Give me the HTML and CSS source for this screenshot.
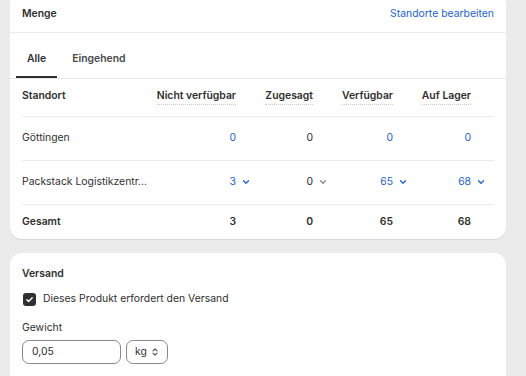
FILE: index.html
```html
<!DOCTYPE html>
<html lang="de">

<head>
     <meta charset="UTF-8">
     <meta name="viewport" content="width=device-width, initial-scale=1.0">
     <title>Menge</title>
     <link rel="stylesheet" href="styles.css">
</head>

<body>
     <div class="page">
          <div class="card stock">
               <div class="cardHeader">
                    <h2>Menge</h2>
                    <a class="link" href="#">Standorte bearbeiten</a>
               </div>
               <div class="tabs">
                    <button class="tab active">Alle</button>
                    <button class="tab">Eingehend</button>
               </div>
               <div class="table">
                    <div class="row head">
                         <span>Standort</span>
                         <span class="num"><em>Nicht verfügbar</em></span>
                         <span class="num"><em>Zugesagt</em></span>
                         <span class="num"><em>Verfügbar</em></span>
                         <span class="num"><em>Auf Lager</em></span>
                    </div>
                    <div class="row">
                         <span>Göttingen</span>
                         <span class="num blue">0</span>
                         <span class="num">0</span>
                         <span class="num blue">0</span>
                         <span class="num blue">0</span>
                    </div>
                    <div class="row">
                         <span>Packstack Logistikzentr...</span>
                         <span class="num blue">3<svg class="chev" viewBox="0 0 8 8"><path d="M1.5 2.8 4 5.3 6.5 2.8" /></svg></span>
                         <span class="num">0<svg class="chev gray" viewBox="0 0 8 8"><path d="M1.5 2.8 4 5.3 6.5 2.8" /></svg></span>
                         <span class="num blue">65<svg class="chev" viewBox="0 0 8 8"><path d="M1.5 2.8 4 5.3 6.5 2.8" /></svg></span>
                         <span class="num blue">68<svg class="chev" viewBox="0 0 8 8"><path d="M1.5 2.8 4 5.3 6.5 2.8" /></svg></span>
                    </div>
                    <div class="row total">
                         <span>Gesamt</span>
                         <span class="num">3</span>
                         <span class="num">0</span>
                         <span class="num">65</span>
                         <span class="num">68</span>
                    </div>
               </div>
          </div>

          <div class="card shipping">
               <h2>Versand</h2>
               <label class="check">
                    <span class="box"><svg viewBox="0 0 13 13"><path d="M3.8 6.7 5.6 8.4 9.2 4.7" /></svg></span>
                    Dieses Produkt erfordert den Versand
               </label>
               <div class="field">
                    <span class="fieldLabel">Gewicht</span>
                    <div class="inputs">
                         <div class="input">0,05</div>
                         <div class="select">kg<svg viewBox="0 0 8 10"><path d="M2 3.8 4 1.8 6 3.8M2 6.2 4 8.2 6 6.2" /></svg></div>
                    </div>
               </div>
          </div>
     </div>
</body>

</html>
```

FILE: styles.css
```css
* {
     margin: 0px;
     padding: 0px;
     box-sizing: border-box;
     font-family: Inter, "Noto Sans", sans-serif;
}

body {
     background-color: #ebebeb;
     color: #303030;
     font-size: 10.4px;
     line-height: 16px;
     overflow: hidden;
}

.page {
     display: flex;
     flex-direction: column;
     gap: 14px;
     padding: 0px 20px 0px 10px;
}

.card {
     background-color: #fff;
     border-radius: 12px;
     box-shadow: 0px 1px 0px rgba(26, 26, 26, 0.09);
}

.stock {
     margin-top: -8px;
}

h2 {
     font-size: 10.4px;
     font-weight: 600;
}

.cardHeader {
     display: flex;
     justify-content: space-between;
     padding: 14px 12px 10px 12px;
     border-bottom: 1px solid #ebebeb;
}

.link {
     color: #1d63cf;
     text-decoration: none;
}

.tabs {
     display: flex;
     gap: 4px;
     padding: 11px 6px 0px 6px;
     border-bottom: 1px solid #e6e6e6;
}

.tab {
     background: none;
     border: none;
     border-bottom: 2px solid transparent;
     padding: 7px 11px 9px 11px;
     font-size: 10.4px;
     line-height: 16px;
     font-weight: 600;
     color: #4a4a4a;
}

.tab.active {
     color: #303030;
     border-bottom-color: #303030;
}

.table {
     padding: 0px 12px;
}

.row {
     display: grid;
     grid-template-columns: minmax(0, 1fr) 80px 48px 51px 49px;
     column-gap: 29px;
     padding: 13px 23px 14px 0px;
     border-bottom: 1px solid #ebebeb;
     white-space: nowrap;

     .num {
          display: flex;
          justify-content: flex-end;
          align-items: center;
     }

     .blue {
          color: #1d63cf;
     }
}

.row.head {
     padding: 9px 23px 11px 0px;
     font-weight: 600;

     em {
          font-style: normal;
          border-bottom: 1px dotted #c9c9c9;
     }
}

.row.total {
     padding: 9px 23px 9px 0px;
     font-weight: 600;
     border-bottom: none;
}

.chev {
     width: 8px;
     height: 8px;
     margin-left: 6px;
     margin-right: -14px;
     fill: none;
     stroke: #1d63cf;
     stroke-width: 1.3;
     stroke-linecap: round;
     stroke-linejoin: round;
}

.chev.gray {
     stroke: #8a8a8a;
}

.shipping {
     display: flex;
     flex-direction: column;
     padding: 13px 12px 24px 12px;
     height: 140px;
     border-radius: 12px 12px 0px 0px;

     h2 {
          margin-bottom: 9px;
     }
}

.check {
     display: flex;
     align-items: center;
     gap: 7px;

     .box {
          width: 13px;
          height: 13px;
          margin-left: 1px;
          border-radius: 3px;
          background-color: #303030;
          display: flex;
     }

     svg {
          width: 13px;
          height: 13px;
          fill: none;
          stroke: #fff;
          stroke-width: 1.4;
          stroke-linecap: round;
          stroke-linejoin: round;
     }
}

.field {
     display: flex;
     flex-direction: column;
     gap: 4px;
     margin-top: 13px;
}

.inputs {
     display: flex;
     gap: 5px;
}

.input,
.select {
     height: 24px;
     border: 1px solid #8a8a8a;
     border-radius: 7px;
     display: flex;
     align-items: center;
}

.input {
     width: 99px;
     padding-left: 9px;
}

.select {
     width: 42px;
     padding-left: 8px;
     gap: 4px;

     svg {
          width: 8px;
          height: 10px;
          fill: none;
          stroke: #4a4a4a;
          stroke-width: 1.1;
          stroke-linecap: round;
          stroke-linejoin: round;
     }
}
```
